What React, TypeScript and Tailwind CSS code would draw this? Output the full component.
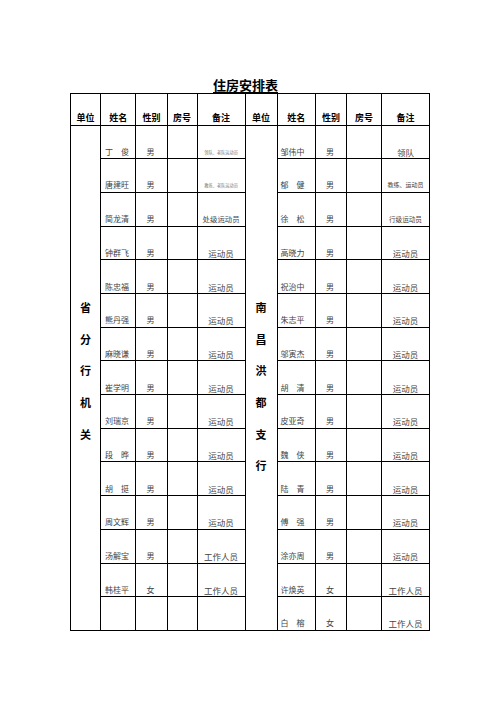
import React from 'react';

type Row = { name: string; sex: string; note: string; noteCls?: string };

const LEFT: Row[] = [
  { name: '丁\u3000俊', sex: '男', note: '领队、老队运动员', noteCls: 'text-[4.2px] text-[#777]' },
  { name: '唐建旺', sex: '男', note: '教练、老队运动员', noteCls: 'text-[4.2px] text-[#777]' },
  { name: '简龙清', sex: '男', note: '处级运动员', noteCls: 'text-[7.4px]' },
  { name: '钟群飞', sex: '男', note: '运动员' },
  { name: '陈忠福', sex: '男', note: '运动员' },
  { name: '熊丹强', sex: '男', note: '运动员' },
  { name: '麻晓谦', sex: '男', note: '运动员' },
  { name: '崔学明', sex: '男', note: '运动员' },
  { name: '刘瑞京', sex: '男', note: '运动员' },
  { name: '段\u3000晔', sex: '男', note: '运动员' },
  { name: '胡\u3000挺', sex: '男', note: '运动员' },
  { name: '周文辉', sex: '男', note: '运动员' },
  { name: '汤解宝', sex: '男', note: '工作人员' },
  { name: '韩桂平', sex: '女', note: '工作人员' },
  { name: '', sex: '', note: '' },
];

const RIGHT: Row[] = [
  { name: '邹伟中', sex: '男', note: '领队' },
  { name: '郁\u3000健', sex: '男', note: '教练、运动员', noteCls: 'text-[6px]' },
  { name: '徐\u3000松', sex: '男', note: '行级运动员', noteCls: 'text-[6.6px]' },
  { name: '高晓力', sex: '男', note: '运动员' },
  { name: '祝治中', sex: '男', note: '运动员' },
  { name: '朱志平', sex: '男', note: '运动员' },
  { name: '邬寅杰', sex: '男', note: '运动员' },
  { name: '胡\u3000清', sex: '男', note: '运动员' },
  { name: '皮亚奇', sex: '男', note: '运动员' },
  { name: '魏\u3000侠', sex: '男', note: '运动员' },
  { name: '陆\u3000青', sex: '男', note: '运动员' },
  { name: '傅\u3000强', sex: '男', note: '运动员' },
  { name: '涂亦周', sex: '男', note: '运动员' },
  { name: '许焕英', sex: '女', note: '工作人员' },
  { name: '白\u3000榕', sex: '女', note: '工作人员' },
];

const HEAD = ['单位', '姓名', '性别', '房号', '备注'];

const td = 'border border-black align-bottom p-0';

function UnitCell({ chars }: { chars: string[] }) {
  return (
    <td rowSpan={15} className="border border-black align-top p-0">
      <div className="flex flex-col items-center pt-[166px]">
        {chars.map((c, i) => (
          <div key={i} className="h-[31.6px] flex items-center justify-center text-[11px] font-bold text-black">
            {c}
          </div>
        ))}
      </div>
    </td>
  );
}

function Cells({ r, right }: { r: Row; right?: boolean }) {
  return (
    <>
      <td className={td}>
        <div className={`leading-[10px] pb-[1.5px] text-[8px] text-[#444] whitespace-nowrap ${right ? 'pl-[3px]' : 'pl-[4px]'}`}>{r.name}</div>
      </td>
      <td className={td}>
        <div className="leading-[10px] pb-[1.5px] text-[8px] text-[#444] text-center pr-[2px]">{r.sex}</div>
      </td>
      <td className={td}></td>
      <td className={td}>
        <div className={`leading-[10px] pb-[1.5px] text-center whitespace-nowrap text-[#444] ${r.noteCls ?? 'text-[8.5px]'}`}>{r.note}</div>
      </td>
    </>
  );
}

export default function App() {
  return (
    <div className="w-[496px] h-[702px] bg-white pt-[75px]" style={{ fontFamily: '"Noto Sans CJK SC", "Noto Sans", sans-serif' }}>
      <div className="h-[16px] leading-[16px] text-center pr-[5px]">
        <span className="text-[13px] font-bold underline underline-offset-[2px] text-black">住房安排表</span>
      </div>
      <table className="ml-[70px] mt-[2px] w-[360px] table-fixed border-collapse">
        <colgroup>
          <col className="w-[30px]" />
          <col className="w-[35.3px]" />
          <col className="w-[31.3px]" />
          <col className="w-[30px]" />
          <col className="w-[48px]" />
          <col className="w-[32px]" />
          <col className="w-[38.4px]" />
          <col className="w-[31px]" />
          <col className="w-[35px]" />
          <col className="w-[48px]" />
        </colgroup>
        <tbody>
          <tr className="h-[31.6px]">
            {[...HEAD, ...HEAD].map((h, i) => (
              <td key={i} className={td}>
                <div className="leading-[12px] text-[9px] font-bold text-black text-center pb-[0.5px]">{h}</div>
              </td>
            ))}
          </tr>
          {LEFT.map((l, i) => (
            <tr key={i} className="h-[33.7px]">
              {i === 0 && <UnitCell chars={['省', '分', '行', '机', '关']} />}
              <Cells r={l} />
              {i === 0 && <UnitCell chars={['南', '昌', '洪', '都', '支', '行']} />}
              <Cells r={RIGHT[i]} right />
            </tr>
          ))}
        </tbody>
      </table>
    </div>
  );
}
